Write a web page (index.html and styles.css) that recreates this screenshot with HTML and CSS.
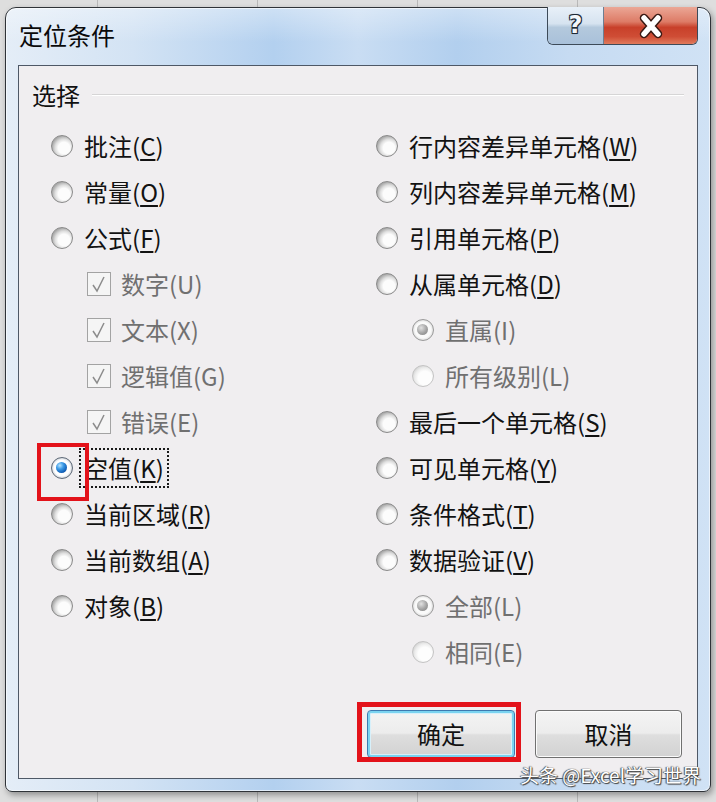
FILE: index.html
```html
<!DOCTYPE html>
<html lang="zh-CN">
<head>
<meta charset="utf-8">
<title>定位条件</title>
<link rel="stylesheet" href="styles.css">
</head>
<body>
<div class="window">
  <div class="titlebar">
    <span class="title">定位条件</span>
    <div class="caption-btns">
      <div class="cap-help">?</div>
      <div class="cap-close">
        <svg width="30" height="26" viewBox="0 0 30 26"><path d="M8 5 L22 21 M22 5 L8 21" fill="none" stroke="#3a1a14" stroke-width="8.5" stroke-linecap="round"/><path d="M8 5 L22 21 M22 5 L8 21" fill="none" stroke="#ffffff" stroke-width="5.5" stroke-linecap="round"/></svg>
      </div>
    </div>
  </div>
  <div class="client">
    <div class="group-head"><span class="group-label">选择</span><span class="rule"></span></div>
    <div class="cols">
      <div class="col">
        <div class="row"><span class="radio"></span><span class="lbl">批注(<u>C</u>)</span></div>
        <div class="row"><span class="radio"></span><span class="lbl">常量(<u>O</u>)</span></div>
        <div class="row"><span class="radio"></span><span class="lbl">公式(<u>F</u>)</span></div>
        <div class="row sub"><span class="check"><svg width="24" height="24" viewBox="0 0 24 24"><polyline points="6,13 10,19 17,5" fill="none" stroke="#8c8c8c" stroke-width="1.5"/></svg></span><span class="lbl dis">数字(U)</span></div>
        <div class="row sub"><span class="check"><svg width="24" height="24" viewBox="0 0 24 24"><polyline points="6,13 10,19 17,5" fill="none" stroke="#8c8c8c" stroke-width="1.5"/></svg></span><span class="lbl dis">文本(X)</span></div>
        <div class="row sub"><span class="check"><svg width="24" height="24" viewBox="0 0 24 24"><polyline points="6,13 10,19 17,5" fill="none" stroke="#8c8c8c" stroke-width="1.5"/></svg></span><span class="lbl dis">逻辑值(G)</span></div>
        <div class="row sub"><span class="check"><svg width="24" height="24" viewBox="0 0 24 24"><polyline points="6,13 10,19 17,5" fill="none" stroke="#8c8c8c" stroke-width="1.5"/></svg></span><span class="lbl dis">错误(E)</span></div>
        <div class="row"><span class="radio on marked"></span><span class="lbl focus">空值(<u>K</u>)</span></div>
        <div class="row"><span class="radio"></span><span class="lbl">当前区域(<u>R</u>)</span></div>
        <div class="row"><span class="radio"></span><span class="lbl">当前数组(<u>A</u>)</span></div>
        <div class="row"><span class="radio"></span><span class="lbl">对象(<u>B</u>)</span></div>
      </div>
      <div class="col">
        <div class="row"><span class="radio"></span><span class="lbl">行内容差异单元格(<u>W</u>)</span></div>
        <div class="row"><span class="radio"></span><span class="lbl">列内容差异单元格(<u>M</u>)</span></div>
        <div class="row"><span class="radio"></span><span class="lbl">引用单元格(<u>P</u>)</span></div>
        <div class="row"><span class="radio"></span><span class="lbl">从属单元格(<u>D</u>)</span></div>
        <div class="row sub"><span class="radio dis-on"></span><span class="lbl dis">直属(I)</span></div>
        <div class="row sub"><span class="radio dis-off"></span><span class="lbl dis">所有级别(L)</span></div>
        <div class="row"><span class="radio"></span><span class="lbl">最后一个单元格(<u>S</u>)</span></div>
        <div class="row"><span class="radio"></span><span class="lbl">可见单元格(<u>Y</u>)</span></div>
        <div class="row"><span class="radio"></span><span class="lbl">条件格式(<u>T</u>)</span></div>
        <div class="row"><span class="radio"></span><span class="lbl">数据验证(<u>V</u>)</span></div>
        <div class="row sub"><span class="radio dis-on"></span><span class="lbl dis">全部(L)</span></div>
        <div class="row sub"><span class="radio dis-off"></span><span class="lbl dis">相同(E)</span></div>
      </div>
    </div>
    <div class="actions">
      <button class="btn default marked">确定</button>
      <button class="btn">取消</button>
    </div>
  </div>
  <div class="watermark">头条 @Excel学习世界</div>
</div>
</body>
</html>
```
FILE: styles.css
```css
* { box-sizing: border-box; }
html, body { margin: 0; padding: 0; }
body {
  width: 716px;
  height: 802px;
  overflow: hidden;
  background-color: #dedede;
  background-image: repeating-linear-gradient(90deg, transparent 0 96px, #b9b9b9 96px 97px, transparent 97px 160px);
  background-position: 1px 0;
  font-family: "Microsoft YaHei", "Noto Sans CJK SC", "Noto Sans", sans-serif;
  padding: 7px 0 0 5px;
}
.window {
  position: relative;
  width: 706px;
  height: 785px;
  border: 1px solid #2f3338;
  border-radius: 11px 11px 7px 7px;
  background: linear-gradient(90deg, #e4edf7 0%, #d3e3f4 18%, #b3d0ef 38%, #c9ddf3 50%, #b2cfee 64%, #c6dbf2 80%, #d0e2f5 100%);
  box-shadow: 2px 3px 6px rgba(0,0,0,0.35), inset 0 0 0 1px rgba(255,255,255,0.6);
  display: flex;
  flex-direction: column;
}
.titlebar {
  height: 57px;
  display: flex;
  align-items: flex-start;
  justify-content: space-between;
  padding-left: 13px;
  background: linear-gradient(180deg, rgba(255,255,255,0.35) 0%, rgba(255,255,255,0) 60%);
  border-radius: 10px 10px 0 0;
}
.title {
  margin-top: 11px;
  font-size: 24px;
  line-height: 32px;
  color: #0a0a0a;
}
.caption-btns {
  display: flex;
  margin-right: 12px;
  margin-top: -1px;
  height: 38px;
  border: 1px solid #3d4a58;
  border-top: none;
  border-radius: 0 0 6px 6px;
  overflow: hidden;
}
.cap-help {
  width: 56px;
  height: 37px;
  background: linear-gradient(180deg, #e8f0f8 0%, #d6e3f0 45%, #b4c9dd 55%, #a9c1da 100%);
  border-right: 1px solid #6d7f92;
  font-family: "DejaVu Sans", sans-serif;
  font-weight: bold;
  font-size: 24px;
  line-height: 36px;
  text-align: center;
  color: #f4f7fa;
  text-shadow: -1px -1px 0 #1f2a36, 1px -1px 0 #1f2a36, -1px 1px 0 #1f2a36, 1px 1px 0 #1f2a36, 0 0 2px #1f2a36;
}
.cap-close {
  width: 93px;
  height: 37px;
  background: linear-gradient(180deg, #eba796 0%, #dd7b66 40%, #c8402a 55%, #cf4d35 80%, #e07a5c 100%);
  display: flex;
  align-items: center;
  justify-content: center;
}
.client {
  margin: 0 12px;
  height: 714px;
  border: 1px solid #4e5866;
  background: #f0eef0;
  display: flex;
  flex-direction: column;
}
.group-head {
  display: flex;
  align-items: center;
  padding: 14px 13px 0 13px;
  height: 44px;
}
.group-label {
  font-size: 24px;
  line-height: 30px;
  color: #111;
}
.rule {
  flex: 1;
  margin-left: 12px;
  height: 2px;
  border-top: 1px solid #d6d5d6;
  border-bottom: 1px solid #ffffff;
}
.cols {
  display: grid;
  grid-template-columns: 325px 1fr;
  padding-left: 32px;
  margin-top: 13px;
}
.row {
  display: flex;
  align-items: center;
  height: 46px;
}
.row.sub { padding-left: 36px; }
.lbl {
  font-size: 24px;
  line-height: 30px;
  color: #121212;
  white-space: nowrap;
}
.lbl u { text-decoration-thickness: 2px; text-underline-offset: 3px; }
.lbl.dis { color: #707070; }
.lbl.focus {
  outline: 2px dotted #1a1a1a;
  outline-offset: 3px;
}
.radio {
  position: relative;
  flex: none;
  width: 22px;
  height: 22px;
  margin-right: 11px;
  border-radius: 50%;
  border: 1.5px solid #8a8a8a;
  background: radial-gradient(circle at 60% 60%, #fcfcfc 0 34%, #dedede 52%, #a8a8a8 72%, #e6e6e6 90%);
}
.radio.on {
  border-color: #5f6a78;
  background: radial-gradient(circle, #ffffff 0 55%, #c9ced6 75%, #eef0f3 100%);
}
.radio.on::before {
  content: "";
  position: absolute;
  left: 4px; top: 4px;
  width: 11px; height: 11px;
  border-radius: 50%;
  background: radial-gradient(circle at 35% 32%, #b7e4ff 0%, #3c9ae6 35%, #1360b8 70%, #0b3c7d 100%);
}
.radio.marked::after {
  content: "";
  position: absolute;
  left: -15px; top: -15px;
  width: 44px; height: 50px;
  border: 4px solid #e3121a;
}
.radio.dis-on {
  border-color: #9a9a9a;
  background: radial-gradient(circle, #fafafa 0 55%, #d3d3d3 80%, #efefef 100%);
}
.radio.dis-on::before {
  content: "";
  position: absolute;
  left: 4px; top: 4px;
  width: 11px; height: 11px;
  border-radius: 50%;
  background: radial-gradient(circle at 38% 35%, #e2e2e2 0%, #a3a3a3 55%, #7e7e7e 100%);
}
.radio.dis-off {
  border-color: #c4c4c4;
  background: radial-gradient(circle at 60% 60%, #fdfdfd 0 40%, #ececec 60%, #cfcfcf 80%, #f0f0f0 100%);
}
.check {
  flex: none;
  width: 24px;
  height: 24px;
  margin-right: 10px;
  border: 1.5px solid #a3a3a3;
  background: #f5f5f5;
  display: flex;
}
.check svg { display: block; margin: -1.5px; }
.actions {
  margin-top: auto;
  display: flex;
  justify-content: flex-end;
  gap: 20px;
  padding: 0 15px 20px 0;
}
.btn {
  position: relative;
  width: 147px;
  height: 48px;
  border: 1px solid #707070;
  border-radius: 4px;
  background: linear-gradient(180deg, #f4f4f4 0%, #ececec 48%, #dedede 52%, #d2d2d2 100%);
  box-shadow: inset 0 0 0 1px #fbfbfb;
  font-family: "Microsoft YaHei", "Noto Sans CJK SC", sans-serif;
  font-size: 24px;
  line-height: 30px;
  color: #111;
  padding: 0;
}
.btn.default {
  width: 148px;
  border-color: #3d7ab0;
  box-shadow: inset 0 0 0 2px #7ad3f0, inset 0 0 0 3px #d7f0fa;
}
.btn.marked::after {
  content: "";
  position: absolute;
  left: -11px; top: -9px; right: -7px; bottom: -5px;
  border: 5px solid #e3121a;
}
.watermark {
  position: absolute;
  left: 514px;
  top: 755px;
  font-family: "Noto Sans CJK SC", "Noto Sans", sans-serif;
  font-size: 19px;
  line-height: 24px;
  color: #ffffff;
  white-space: nowrap;
  text-shadow: 0 0 1px #333, 1px 1px 1px #444, -1px 0 1px #555;
}
```
